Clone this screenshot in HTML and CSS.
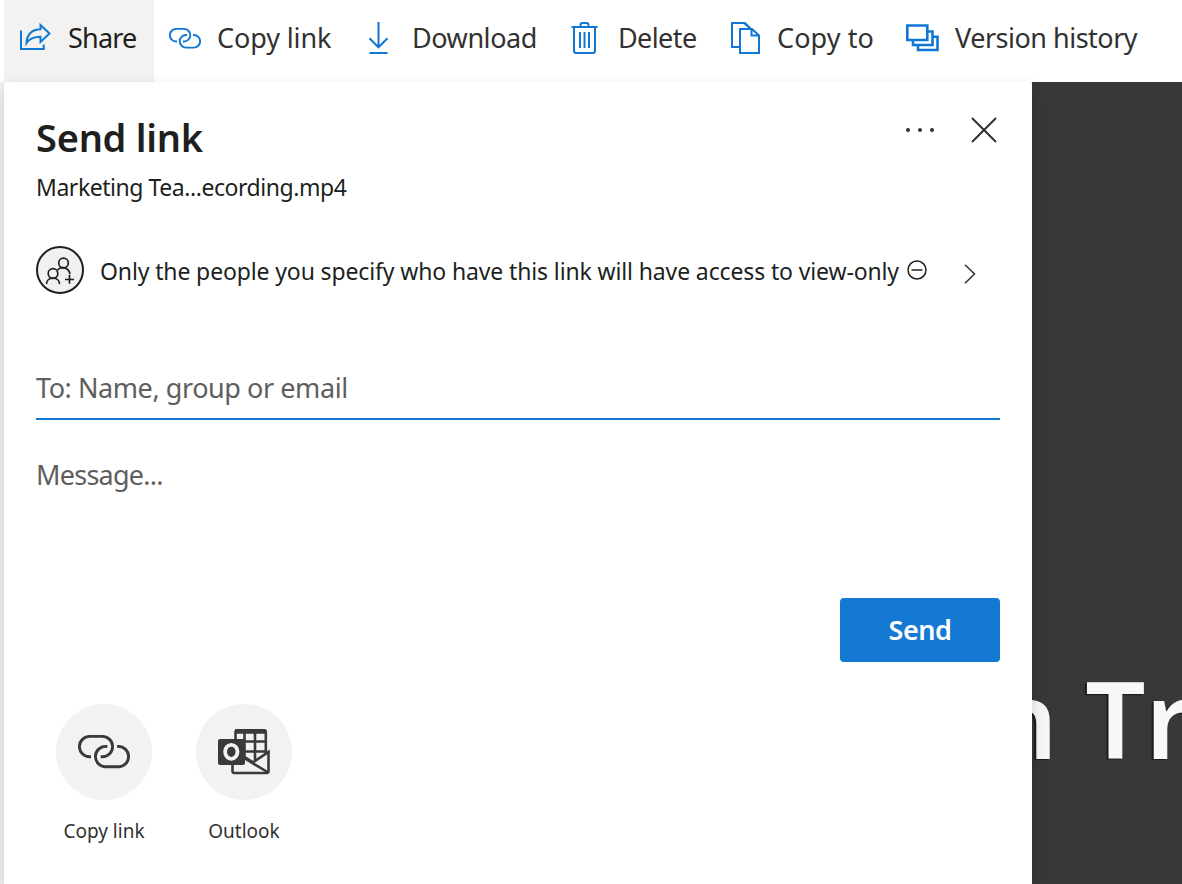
FILE: index.html
```
<!DOCTYPE html>
<html lang="en">
<head>
  <meta charset="UTF-8">
  <meta name="viewport" content="width=device-width, initial-scale=1.0">
  <title>Send link</title>
  <link rel="stylesheet" href="styles.css">
</head>
<body>
  <svg class="sprite" width="0" height="0">
    <symbol id="link" viewBox="0 0 52 34">
      <path d="M13 21.8H11.6a10.2 10.2 0 0 1 0-20.4h12.8a10.2 10.2 0 0 1 0 20.4H22.6M39 11.4h1.4a10.2 10.2 0 0 1 0 20.4H27.6a10.2 10.2 0 0 1 0-20.4h1.8"/>
    </symbol>
  </svg>

  <nav class="toolbar">
    <div class="command active">
      <svg class="icon" width="32" height="32" viewBox="0 0 32 32">
        <path d="M1 8.500V27h22.700v-4.500M20.500 3L29.500 11.500l-9 8.500v-5.200C14 14.800 9.500 16.300 6.500 21C7 12.500 12 7.500 20.500 7.200z"/>
      </svg>
      <span class="share">Share</span>
    </div>
    <div class="command copy-link">
      <svg class="icon link-icon" width="32" height="21"><use href="#link"/></svg>
      <span>Copy link</span>
    </div>
    <div class="command">
      <svg class="icon" width="32" height="32" viewBox="0 0 32 32">
        <path d="M16.500 0v25M7.500 16.300l9 9 9-9M7.500 31h18"/>
      </svg>
      <span class="download">Download</span>
    </div>
    <div class="command">
      <svg class="icon" width="32" height="32" viewBox="0 0 32 32">
        <path d="M3.500 5h26M6 5v24q0 2 2 2h17q2 0 2-2V5M12.500 5V3q0-2 2-2h4q2 0 2 2v2M12 10v16M16.500 10v16M21 10v16"/>
      </svg>
      <span class="delete">Delete</span>
    </div>
    <div class="command">
      <svg class="icon" width="32" height="32" viewBox="0 0 32 32">
        <path d="M12 25H4V1h13l5 5M12 31V7h12l7 6.500V31zM23.500 7v6.500H31M16 1l7 6"/>
      </svg>
      <span class="copy-to">Copy to</span>
    </div>
    <div class="command">
      <svg class="icon history" width="33" height="32" viewBox="0 0 33 32">
        <path d="M1.300 3.500h20v14.500h-20zM21 9.500h5.500v13.500H7V18M26.500 14.700h5v13.300H12V23"/>
      </svg>
      <span class="version">Version history</span>
    </div>
  </nav>

  <main class="stage">
    <section class="panel">
      <header class="panel-header">
        <div>
          <h1>Send link</h1>
          <p class="filename">Marketing Tea...ecording.mp4</p>
        </div>
        <div class="panel-actions">
          <svg width="30" height="6" viewBox="0 0 30 6" fill="#323130">
            <circle cx="3" cy="3" r="2"/><circle cx="15" cy="3" r="2"/><circle cx="27" cy="3" r="2"/>
          </svg>
          <svg width="26" height="26" viewBox="0 0 26 26" fill="none" stroke="#323130" stroke-width="2">
            <path d="M1 1l24 24M25 1L1 25"/>
          </svg>
        </div>
      </header>

      <div class="access">
        <svg width="48" height="48" viewBox="0 0 48 48" fill="none" stroke="#201f1e" stroke-width="2">
          <circle cx="24" cy="24" r="23" fill="#f1f1f1"/>
          <g stroke-width="1.700">
            <circle cx="27.500" cy="17" r="4.800"/>
            <circle cx="17" cy="27.500" r="4.800"/>
            <path d="M10.500 38c0-7.700 13-7.700 13 0M21.500 24c3.500-4 11-3 12.500 4M33.500 28.800v9M29 33.500h9"/>
          </g>
        </svg>
        <span class="access-text">Only the people you specify who have this link will have access to view-only</span>
        <svg class="blocked" width="20" height="20" viewBox="0 0 20 20" fill="none" stroke="#201f1e" stroke-width="1.500">
          <circle cx="10" cy="10" r="9"/><path d="M4.500 10h11"/>
        </svg>
        <svg class="chevron" width="12" height="20" viewBox="0 0 12 20" fill="none" stroke="#323130" stroke-width="1.500">
          <path d="M1 .7l9.500 9.300L1 19.300"/>
        </svg>
      </div>

      <div class="field to">To: Name, group or email</div>
      <div class="field message">Message...</div>

      <button class="send" type="button">Send</button>

      <div class="share-targets">
        <div class="target">
          <div class="circle">
            <svg class="link-icon dark" width="52" height="34"><use href="#link"/></svg>
          </div>
          <span>Copy link</span>
        </div>
        <div class="target">
          <div class="circle">
            <svg width="52" height="46" viewBox="0 0 52 46" fill="none" stroke="#3b3a39" stroke-width="2.600">
              <path d="M17.500 12V3q0-1.700 1.700-1.700h27q1.600 0 1.600 1.700v21M26.500 3v28M37 3v28M18 12.500h29M27 22.500h20"/>
              <path d="M17 2.500h30" stroke-width="4.500"/>
              <path class="envelope" d="M14.500 31v11q0 2 2 2h32q2 0 2-2V23L35 33.300l-8-5"/>
              <path d="M26 29l23.500 14"/>
              <rect x="0" y="10" width="27" height="26" rx="2" fill="#3b3a39" stroke="none"/>
              <ellipse cx="13.300" cy="22.800" rx="6.200" ry="7" stroke="#f3f2f1" stroke-width="3.800"/>
            </svg>
          </div>
          <span>Outlook</span>
        </div>
      </div>
    </section>
    <div class="video">
      <div class="caption">n Tr</div>
    </div>
  </main>
</body>
</html>
```
FILE: styles.css
```
* {
  box-sizing: border-box;
}
body {
  margin: 0;
  overflow: hidden;
  background-color: #fff;
  color: #201f1e;
  font-family: "Noto Sans", "Open Sans", sans-serif;
}
h1, p {
  margin: 0;
}
svg {
  flex: none;
}
.sprite {
  display: block;
}

/* Command bar */
.toolbar {
  display: grid;
  grid-template-columns: 150px 192px 206px 160px 178px 1fr;
  height: 82px;
  padding-left: 4px;
}
.command {
  display: flex;
  align-items: center;
  gap: 16px;
  padding: 0 0 6px 16px;
  color: #323130;
  font-size: 27px;
  letter-spacing: -0.1px;
  white-space: nowrap;
}
.command.active {
  background-color: #f3f2f1;
  color: #201f1e;
}
.command span {
  margin-top: -1px;
}
.copy-link {
  padding-left: 15px;
}
.share {
  letter-spacing: -0.8px;
}
.download {
  padding-left: 2px;
  letter-spacing: -0.45px;
}
.delete {
  padding-left: 2px;
  letter-spacing: -0.6px;
}
.copy-to {
  padding-left: 1px;
  letter-spacing: 0.1px;
}
.version {
  letter-spacing: -0.5px;
}
.icon {
  fill: none;
  stroke: #1078d4;
  stroke-width: 2;
}
.history {
  stroke-width: 2.6;
}
.link-icon {
  fill: none;
  stroke-width: 3.1;
}
.dark {
  stroke: #3b3a39;
  stroke-width: 2.9;
}

/* Share dialog over the video */
.stage {
  display: flex;
  height: 802px;
  padding-left: 4px;
  background-color: #f1f1f0;
}
.panel {
  position: relative;
  z-index: 1;
  width: 1028px;
  padding: 31px 32px 0;
  background-color: #fff;
  border-radius: 4px 4px 0 0;
  box-shadow: 0 6px 16px rgba(0, 0, 0, 0.16);
}
.panel-header {
  display: flex;
  justify-content: space-between;
}
h1 {
  font-size: 38px;
  font-weight: 600;
  letter-spacing: -0.25px;
  line-height: 48px;
}
.filename {
  margin-top: 10px;
  font-size: 23px;
  letter-spacing: -0.45px;
  line-height: 32px;
}
.panel-actions {
  display: flex;
  align-items: center;
  gap: 36px;
  height: 34px;
  padding-right: 3px;
}
.access {
  display: flex;
  align-items: center;
  height: 48px;
  margin-top: 43px;
}
.access-text {
  width: 800px;
  margin-left: 16px;
  padding-top: 2px;
  font-size: 23px;
  letter-spacing: -0.13px;
  white-space: nowrap;
}
.blocked {
  margin-left: 7px;
}
.chevron {
  margin: 8px 0 0 37px;
}
.field {
  color: #605e5c;
  font-size: 27px;
  letter-spacing: -0.43px;
}
.to {
  height: 64px;
  margin-top: 62px;
  border-bottom: 2px solid #1078d4;
  line-height: 64px;
}
.message {
  height: 178px;
  padding-top: 35px;
  letter-spacing: -0.75px;
  line-height: 40px;
}
.send {
  display: block;
  width: 160px;
  height: 64px;
  margin-left: auto;
  padding-bottom: 3px;
  border: none;
  border-radius: 4px;
  background-color: #1379d2;
  color: #fff;
  font-family: inherit;
  font-size: 27px;
  font-weight: 600;
  letter-spacing: -0.5px;
}
.share-targets {
  display: flex;
  gap: 44px;
  margin: 42px 0 0 20px;
}
.target {
  width: 96px;
  color: #323130;
  font-size: 19px;
  line-height: 28px;
  text-align: center;
}
.circle {
  display: flex;
  align-items: center;
  justify-content: center;
  height: 96px;
  margin-bottom: 17px;
  border-radius: 50%;
  background-color: #f3f2f1;
}
.envelope {
  fill: #f3f2f1;
}
.video {
  flex: 1;
  overflow: hidden;
  background-color: #383838;
}
.caption {
  margin: 561px 0 0 -42px;
  color: #f8f8f8;
  font-size: 106px;
  font-kerning: none;
  font-weight: 600;
  line-height: 150px;
  text-shadow: -2px 1px 1px #1a1a1a;
  white-space: nowrap;
}
```
